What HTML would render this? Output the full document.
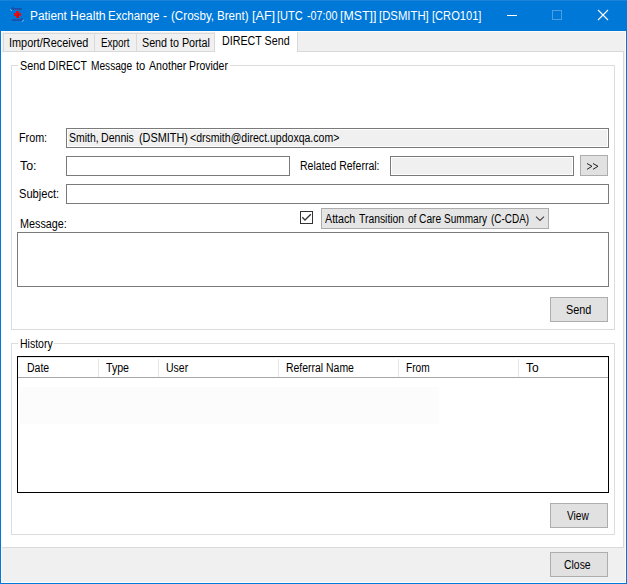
<!DOCTYPE html>
<html><head><meta charset="utf-8">
<style>
html,body{margin:0;padding:0;width:627px;height:584px;overflow:hidden;background:#f0f0f0;}
*{box-sizing:border-box;}
.a{position:absolute;}
.t{position:absolute;font-family:"Liberation Sans",sans-serif;font-size:12px;line-height:12px;white-space:pre;transform-origin:0 0;}
.btn{position:absolute;background:#e1e1e1;border:1px solid #adadad;}
.tb{position:absolute;background:#fff;border:1px solid #7a7a7a;}
.tbd{position:absolute;background:#f0f0f0;border:1px solid #7a7a7a;box-shadow:inset 0 0 0 1px #fff;}
.gl{position:absolute;background:#dcdcdc;}
</style></head><body>
<!-- window frame -->
<div class="a" style="left:0;top:0;width:627px;height:584px;background:#0078d7;"></div>
<div class="a" style="left:0;top:0;width:627px;height:1px;background:#1a83d9;"></div>
<div class="a" style="left:1px;top:31px;width:625px;height:552px;background:#fcfcfc;"></div>
<div class="a" style="left:2px;top:32px;width:623px;height:550px;background:#f0f0f0;"></div>

<!-- title icon -->
<svg class="a" style="left:8px;top:6px" width="20" height="20" viewBox="0 0 20 20">
  <path d="M4 2.9 H14" stroke="#1d4fa6" stroke-width="1.7"/>
  <path d="M5.4 1 L3.6 2.9" stroke="#1d4fa6" stroke-width="1.2" fill="none"/>
  <path d="M2.2 3.4 L3.9 4.9" stroke="#a8c4ea" stroke-width="0.9" fill="none"/>
  <path d="M4 14 H13.6" stroke="#1d4fa6" stroke-width="1.7"/>
  <path d="M13.2 12.2 L14.8 13.8" stroke="#1d4fa6" stroke-width="1.2" fill="none"/>
  <path d="M13.9 15.6 L15.9 14" stroke="#a8c4ea" stroke-width="0.9" fill="none"/>
  <rect x="6" y="5" width="7" height="7" fill="#0078d7"/>
  <rect x="8" y="5" width="3" height="7" fill="#e0101a"/>
  <rect x="6" y="7" width="7" height="3" fill="#e0101a"/>
  <rect x="9" y="8" width="2" height="4" fill="#c80c14"/>
</svg>
<!-- window buttons -->
<div class="a" style="left:507px;top:15px;width:10px;height:1px;background:#fff;"></div>
<div class="a" style="left:552px;top:10px;width:10px;height:10px;border:1px solid #4d9fe4;"></div>
<svg class="a" style="left:597px;top:9px" width="12" height="12" viewBox="0 0 12 12">
  <path d="M1 1 L11 11 M11 1 L1 11" stroke="#fff" stroke-width="1.1"/>
</svg>

<!-- tabs -->
<div class="a" style="left:3px;top:33px;width:212px;height:19px;background:#f0f0f0;border:1px solid #d9d9d9;border-bottom:none;"></div>
<div class="a" style="left:94px;top:33px;width:1px;height:18px;background:#d9d9d9;"></div>
<div class="a" style="left:136px;top:33px;width:1px;height:18px;background:#d9d9d9;"></div>
<!-- tab page -->
<div class="a" style="left:2px;top:51px;width:622px;height:497px;background:#fff;border:1px solid #d9d9d9;border-left:none;"></div>
<!-- active tab -->
<div class="a" style="left:215px;top:31px;width:82px;height:22px;background:#fff;"></div>
<div class="a" style="left:214px;top:32px;width:1px;height:20px;background:#d9d9d9;"></div>
<div class="a" style="left:297px;top:32px;width:1px;height:20px;background:#d9d9d9;"></div>

<!-- group 1 -->
<div class="a" style="left:11px;top:65px;width:604px;height:265px;border:1px solid #dcdcdc;"></div>
<div class="a" style="left:18px;top:60px;width:212px;height:10px;background:#fff;"></div>

<div class="tbd" style="left:66px;top:128px;width:543px;height:20px;"></div>
<div class="tb" style="left:66px;top:156px;width:224px;height:20px;"></div>
<div class="tbd" style="left:390px;top:156px;width:184px;height:20px;"></div>
<div class="btn" style="left:580px;top:155px;width:28px;height:21px;"></div>
<div class="tb" style="left:66px;top:184px;width:543px;height:20px;"></div>

<!-- checkbox -->
<div class="a" style="left:300px;top:211px;width:13px;height:13px;border:1px solid #333;background:#fff;"></div>
<svg class="a" style="left:300px;top:211px" width="13" height="13" viewBox="0 0 13 13">
  <path d="M2.3 6.3 L5 9 L10.8 3.3" stroke="#333" stroke-width="1.3" fill="none"/>
</svg>
<!-- combobox -->
<div class="btn" style="left:321px;top:208px;width:228px;height:21px;background:#e5e5e5;border-color:#acacac;"></div>
<svg class="a" style="left:534px;top:214px" width="12" height="8" viewBox="0 0 12 8">
  <path d="M2 2.7 L6 6.5 L10 2.7" stroke="#404040" stroke-width="1.1" fill="none"/>
</svg>

<div class="tb" style="left:17px;top:232px;width:592px;height:55px;"></div>
<div class="btn" style="left:550px;top:297px;width:58px;height:25px;"></div>

<!-- group 2 -->
<div class="a" style="left:11px;top:343px;width:604px;height:192px;border:1px solid #dcdcdc;"></div>
<div class="a" style="left:18px;top:337px;width:36px;height:10px;background:#fff;"></div>

<!-- listview -->
<div class="a" style="left:17px;top:356px;width:592px;height:137px;border:1px solid #000;background:#fff;"></div>
<div class="a" style="left:18px;top:377px;width:590px;height:1px;background:#a8a8a8;"></div>
<div class="a" style="left:20px;top:387px;width:419px;height:37px;background:#fcfcfc;"></div>
<div class="a" style="left:18px;top:357px;width:590px;height:1px;background:#e8e8e8;"></div>
<div class="a" style="left:98px;top:359px;width:1px;height:18px;background:#e5e5e5;"></div>
<div class="a" style="left:158px;top:359px;width:1px;height:18px;background:#e5e5e5;"></div>
<div class="a" style="left:278px;top:359px;width:1px;height:18px;background:#e5e5e5;"></div>
<div class="a" style="left:398px;top:359px;width:1px;height:18px;background:#e5e5e5;"></div>
<div class="a" style="left:518px;top:359px;width:1px;height:18px;background:#e5e5e5;"></div>

<div class="btn" style="left:550px;top:503px;width:58px;height:25px;"></div>
<div class="btn" style="left:550px;top:552px;width:58px;height:25px;"></div>

<!-- >> glyph -->
<svg class="a" style="left:580px;top:155px" width="28" height="21" viewBox="0 0 28 21">
  <path d="M7 8.5 L12 11.3 L7 14.3 M13 8.5 L18 11.3 L13 14.3" stroke="#222" stroke-width="1" fill="none"/>
</svg>

<div class="t" style="left:30.01px;top:10px;color:#fff;transform:scaleX(0.9861)">Patient</div>
<div class="t" style="left:69.97px;top:10px;color:#fff;transform:scaleX(1.0303)">Health</div>
<div class="t" style="left:108.04px;top:10px;color:#fff;transform:scaleX(0.9615)">Exchange</div>
<div class="t" style="left:163.00px;top:10px;color:#fff;transform:scaleX(1.0000)">-</div>
<div class="t" style="left:170.63px;top:10px;color:#fff;transform:scaleX(0.9690)">(Crosby,</div>
<div class="t" style="left:217.03px;top:10px;color:#fff;transform:scaleX(0.9677)">Brent)</div>
<div class="t" style="left:251.95px;top:10px;color:#fff;transform:scaleX(1.0500)">[AF]</div>
<div class="t" style="left:277.08px;top:10px;color:#fff;transform:scaleX(0.9231)">[UTC</div>
<div class="t" style="left:306.50px;top:10px;color:#fff;transform:scaleX(0.8971)">-07:00</div>
<div class="t" style="left:339.97px;top:10px;color:#fff;transform:scaleX(1.0294)">[MST]]</div>
<div class="t" style="left:379.05px;top:10px;color:#fff;transform:scaleX(0.9451)">[DSMITH]</div>
<div class="t" style="left:432.07px;top:10px;color:#fff;transform:scaleX(0.9269)">[CRO101]</div>
<div class="t" style="left:9.09px;top:37px;color:#000;transform:scaleX(0.9070)">Import/Received</div>
<div class="t" style="left:101.18px;top:37px;color:#000;transform:scaleX(0.8235)">Export</div>
<div class="t" style="left:142.11px;top:37px;color:#000;transform:scaleX(0.8933)">Send to Portal</div>
<div class="t" style="left:222.11px;top:35px;color:#000;transform:scaleX(0.8919)">DIRECT Send</div>
<div class="t" style="left:19.50px;top:60px;color:#000;transform:scaleX(0.8962)">Send</div>
<div class="t" style="left:48.43px;top:60px;color:#000;transform:scaleX(0.8705)">DIRECT</div>
<div class="t" style="left:90.96px;top:60px;color:#000;transform:scaleX(0.8447)">Message</div>
<div class="t" style="left:135.70px;top:60px;color:#000;transform:scaleX(0.9300)">to</div>
<div class="t" style="left:148.70px;top:60px;color:#000;transform:scaleX(0.8881)">Another</div>
<div class="t" style="left:189.13px;top:60px;color:#000;transform:scaleX(0.8705)">Provider</div>
<div class="t" style="left:19.10px;top:132px;color:#000;transform:scaleX(0.8966)">From:</div>
<div class="t" style="left:68.53px;top:132px;color:#000;transform:scaleX(0.8719)">Smith,</div>
<div class="t" style="left:101.12px;top:132px;color:#000;transform:scaleX(0.8806)">Dennis</div>
<div class="t" style="left:139.19px;top:132px;color:#000;transform:scaleX(0.9058)">(DSMITH)</div>
<div class="t" style="left:190.42px;top:132px;color:#000;transform:scaleX(0.8769)">&lt;drsmith@direct.updoxqa.com&gt;</div>
<div class="t" style="left:20.00px;top:160px;color:#000;transform:scaleX(1.0333)">To:</div>
<div class="t" style="left:300.12px;top:160px;color:#000;transform:scaleX(0.8764)">Related Referral:</div>
<div class="t" style="left:19.07px;top:188px;color:#000;transform:scaleX(0.9268)">Subject:</div>
<div class="t" style="left:20.10px;top:218px;color:#000;transform:scaleX(0.9000)">Message:</div>
<div class="t" style="left:325.30px;top:213px;color:#000;transform:scaleX(0.8909)">Attach</div>
<div class="t" style="left:358.90px;top:213px;color:#000;transform:scaleX(0.8635)">Transition</div>
<div class="t" style="left:407.60px;top:213px;color:#000;transform:scaleX(0.8400)">of</div>
<div class="t" style="left:419.15px;top:213px;color:#000;transform:scaleX(0.8520)">Care</div>
<div class="t" style="left:444.46px;top:213px;color:#000;transform:scaleX(0.8380)">Summary</div>
<div class="t" style="left:490.67px;top:213px;color:#000;transform:scaleX(0.8295)">(C-CDA)</div>
<div class="t" style="left:566.10px;top:304px;color:#000;transform:scaleX(0.9038)">Send</div>
<div class="t" style="left:19.62px;top:338px;color:#000;transform:scaleX(0.8750)">History</div>
<div class="t" style="left:27.12px;top:362px;color:#000;transform:scaleX(0.8750)">Date</div>
<div class="t" style="left:106.00px;top:362px;color:#000;transform:scaleX(0.8846)">Type</div>
<div class="t" style="left:166.12px;top:362px;color:#000;transform:scaleX(0.8750)">User</div>
<div class="t" style="left:286.13px;top:362px;color:#000;transform:scaleX(0.8701)">Referral Name</div>
<div class="t" style="left:406.15px;top:362px;color:#000;transform:scaleX(0.8462)">From</div>
<div class="t" style="left:526.00px;top:362px;color:#000;transform:scaleX(1.0000)">To</div>
<div class="t" style="left:567.00px;top:510px;color:#000;transform:scaleX(0.8462)">View</div>
<div class="t" style="left:564.13px;top:559px;color:#000;transform:scaleX(0.8690)">Close</div>
</body></html>
